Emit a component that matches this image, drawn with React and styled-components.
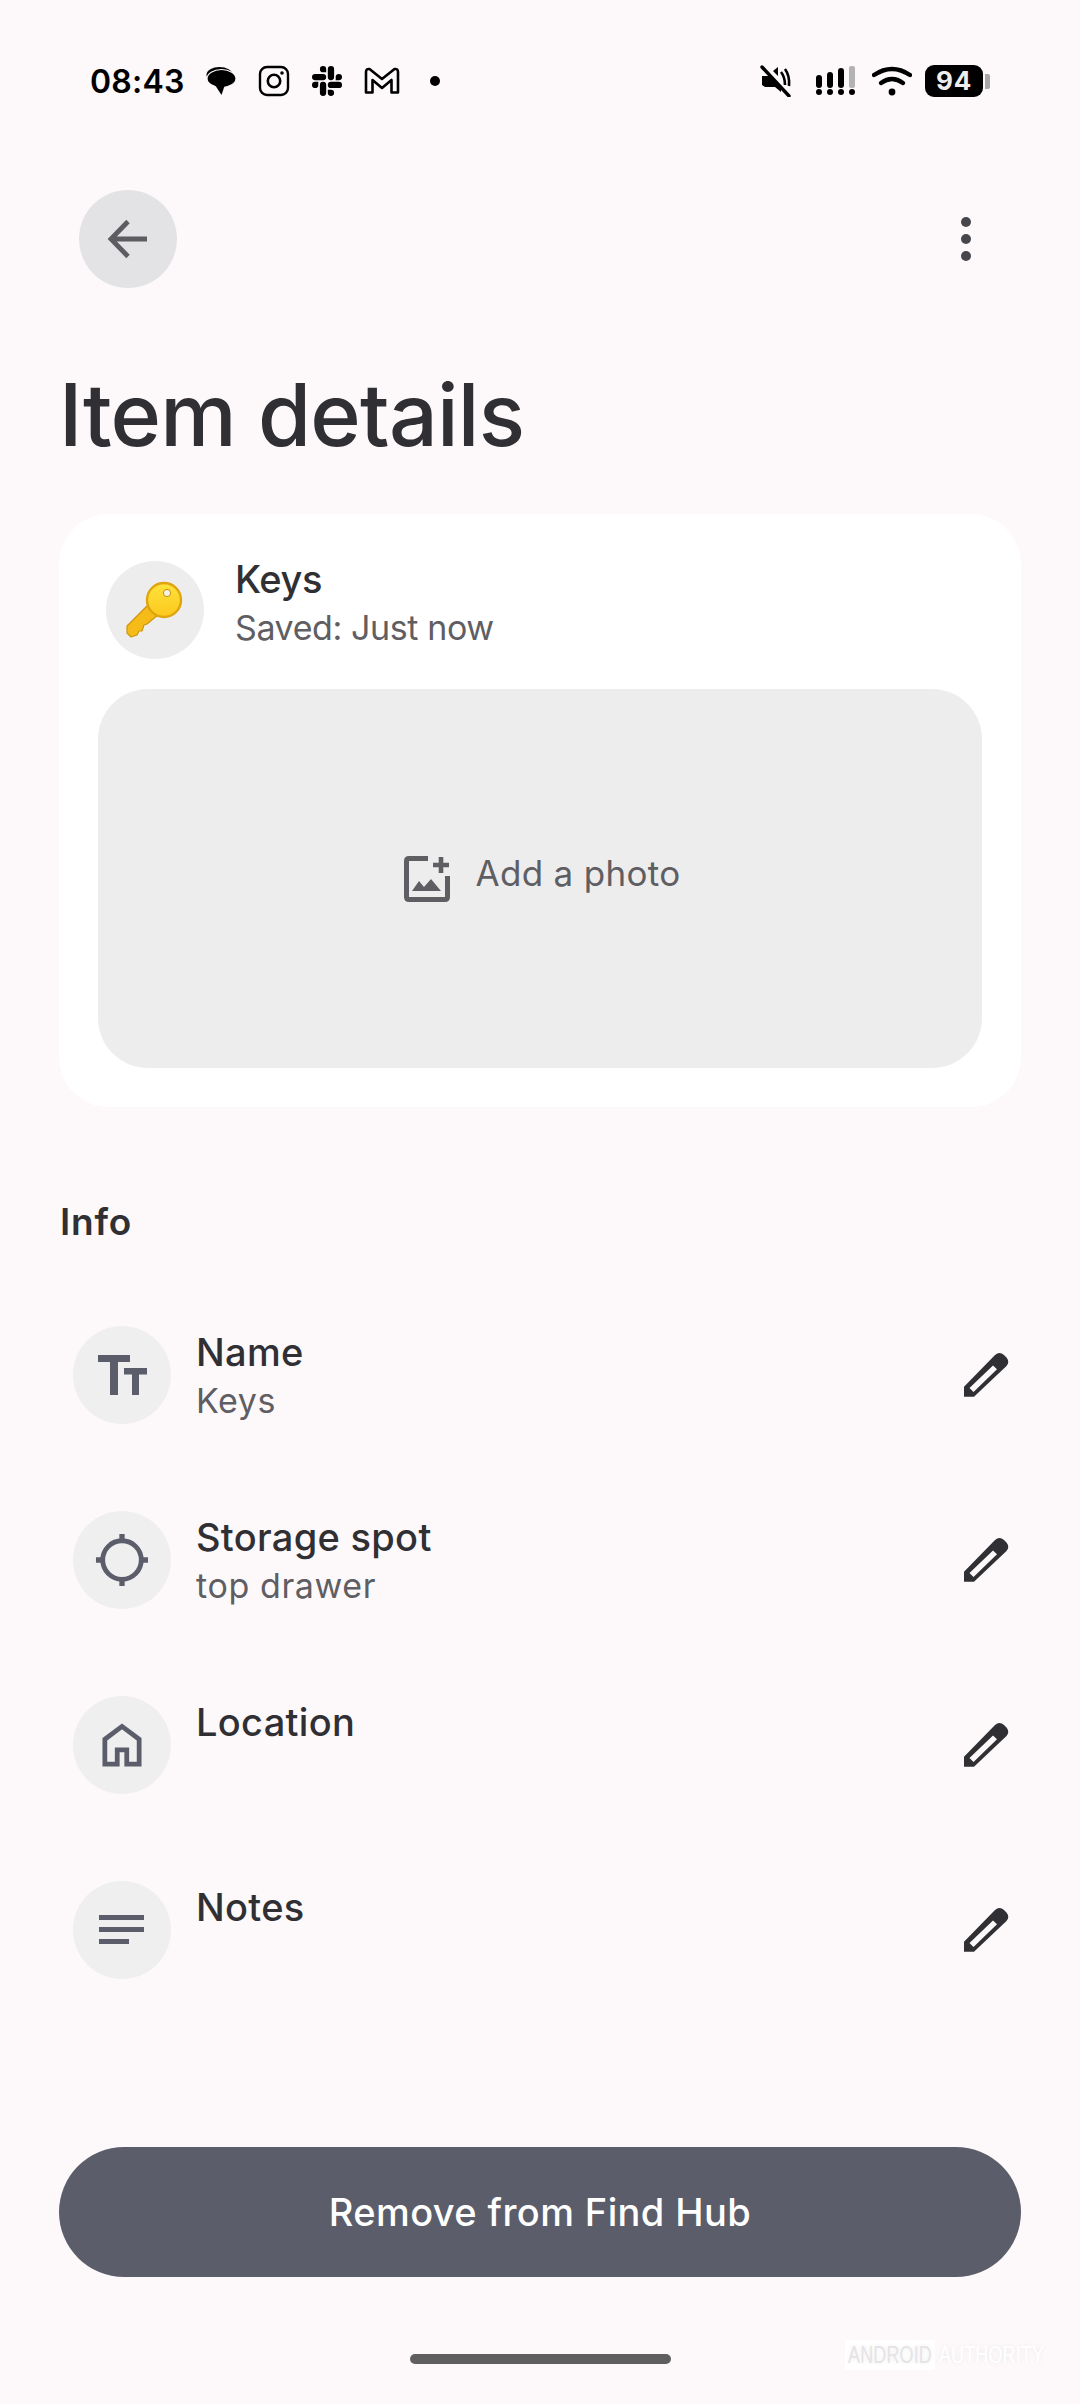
import React from 'react';
import styled, { createGlobalStyle } from 'styled-components';
import { SiSlack } from 'react-icons/si';

const pageBg = '#fdf9fa';
const Global = createGlobalStyle`
  html, body { margin: 0; padding: 0; background: ${pageBg}; }
  * { box-sizing: border-box; }
`;
const font = `Inter, "Noto Sans", sans-serif`;

const Page = styled.div`
  position: relative; width: 1080px; height: 2404px; background: ${pageBg};
  display: flex; flex-direction: column; font-family: ${font}; overflow: hidden;
`;
const StatusBar = styled.div`
  height: 34px; margin-top: 64px; padding: 0 90px 0 90px;
  display: flex; align-items: center; justify-content: space-between; color: #000;
`;
const StatusGroup = styled.div`display: flex; align-items: center; gap: ${p => p.$gap || 0}px;`;
const Time = styled.span`font-size: 32px; font-weight: 600; letter-spacing: 0.2px; width: 94px;`;
const TopBar = styled.div`
  margin-top: 92px; padding: 0 95px 0 79px; height: 98px;
  display: flex; align-items: center; justify-content: space-between;
`;
const BackButton = styled.div`
  width: 98px; height: 98px; border-radius: 50%; background: #e3e2e5;
  display: flex; align-items: center; justify-content: center;
`;
const MoreDots = styled.div`
  display: flex; flex-direction: column; gap: 7px; width: 36px; align-items: center; margin-right: 1px;
`;
const Dot = styled.span`width: 10px; height: 10px; border-radius: 50%; background: #47464b;`;
const Title = styled.h1`
  margin: 77px 0 0 59px; font-size: 86px; line-height: 100px; font-weight: 500;
  color: #303034; letter-spacing: -0.8px;
`;
const Card = styled.section`
  margin: 49px 59px 0; height: 593px; background: #fff; border-radius: 50px;
  padding: 47px 39px 39px;
`;
const CardHead = styled.div`display: flex; align-items: center; margin-left: 8px; height: 98px;`;
const IconCircle = styled.div`
  width: 98px; height: 98px; border-radius: 50%; flex: none;
  background: ${p => p.$light ? '#f0eff0' : '#eeeded'};
  display: flex; align-items: center; justify-content: center;
`;
const HeadText = styled.div`margin-left: 31px; display: flex; flex-direction: column; margin-top: -14px;`;
const HeadName = styled.div`font-size: 38px; line-height: 50px; font-weight: 450; color: #303034; letter-spacing: -0.4px;`;
const HeadSub = styled.div`font-size: 34px; line-height: 48px; color: #5f5e63; letter-spacing: -0.4px;`;
const PhotoBox = styled.div`
  margin-top: 30px; height: 379px; border-radius: 50px; background: #eeeded;
  display: flex; align-items: center; justify-content: center; gap: 26px; padding-left: 4px;
  color: #5f5e63; font-size: 35px; letter-spacing: 0.3px;
`;
const PhotoLabel = styled.span`margin-top: -12px;`;
const SectionTitle = styled.h2`
  margin: 92px 0 0 60px; font-size: 37px; line-height: 46px; font-weight: 600;
  color: #303034; letter-spacing: 0.8px;
`;
const List = styled.div`
  margin-top: 81px; padding: 0 67px 0 73px; display: flex; flex-direction: column; gap: 87px;
`;
const Row = styled.div`display: flex; align-items: flex-start; height: 98px;`;
const RowText = styled.div`flex: 1; margin-left: 25px; margin-top: 2px; display: flex; flex-direction: column;`;
const RowName = styled.div`font-size: 38px; line-height: 48px; font-weight: 450; color: #303034; letter-spacing: 0.3px;`;
const RowValue = styled.div`font-size: 34px; line-height: 50px; color: #5f5e63; letter-spacing: 0.6px;`;
const EditIcon = styled.svg`width: 54px; height: 54px; margin-top: 22px; flex: none;`;
const RemoveButton = styled.button`
  margin: 168px 59px 0; height: 130px; border: 0; border-radius: 65px; background: #5b5d6b;
  color: #fff; font-family: ${font}; font-size: 38px; font-weight: 500; letter-spacing: 0.4px;
`;
const HandleRow = styled.div`margin-top: 77px; display: flex; justify-content: center; padding-left: 1px;`;
const Handle = styled.div`width: 261px; height: 10px; border-radius: 5px; background: #5f5f60;`;
const Watermark = styled.div`
  position: absolute; left: 845px; top: 2340px; display: flex; gap: 5px;
  font-family: "Liberation Sans", sans-serif; font-size: 23px; line-height: 30px;
  transform-origin: left center; letter-spacing: 0.2px;
  transform: scaleX(0.78);
  color: #fff; text-shadow: 0 0 6px rgba(0,0,0,0.08);
  white-space: nowrap;
`;
const WatermarkBox = styled.span`background: #ffffff; color: #e6e3e5; padding: 0 4px;`;

const Pencil = () => (
  <EditIcon viewBox="30 18 54 54">
    <path fillRule="evenodd" fill="#303034" d="M35 66.7 L35 56.7 L66 25 Q70.5 21 75 25 L77.5 27.5 Q81 32 77.5 36 L45 66.7 Z M40.5 58 L44.5 62 L68 39.2 L64 35.6 Z" />
  </EditIcon>
);

const ChatIcon = () => (
  <svg width="30" height="30" viewBox="0 0 30 30">
    <ellipse cx="13.5" cy="9" rx="13" ry="8" fill="#000" />
    <ellipse cx="15.5" cy="12.5" rx="14.5" ry="9" fill="#000" stroke={pageBg} strokeWidth="1.2" />
    <path fill="#000" d="M9 19 L15.5 29 L18.5 20 Z" />
  </svg>
);
const InstaIcon = () => (
  <svg width="32" height="32" viewBox="0 0 32 32" fill="none" stroke="#000">
    <rect x="2" y="2" width="28" height="28" rx="7" strokeWidth="2.4" />
    <circle cx="16" cy="16" r="6.2" strokeWidth="2.6" />
    <circle cx="24" cy="8" r="1.8" fill="#000" stroke="none" />
  </svg>
);
const GmailIcon = () => (
  <svg width="36" height="28" viewBox="0 0 36 28" fill="none" stroke="#000" strokeWidth="2.6" strokeLinejoin="round">
    <path d="M2 25.5 H8.5 V13 L18 21 L27.5 13 V25.5 H34 V5 Q34 1.5 30.5 2 L18 12 L5.5 2 Q2 1.5 2 5 Z" />
  </svg>
);
const MuteIcon = () => (
  <svg width="42" height="32" viewBox="0 0 42 32">
    <path fill="#000" d="M2 11 H8 L10 10 L21 21 V27 L15 22 H5 L2 20 Z M13 6 L18 2 V11 Z" />
    <path d="M21 7 Q25 12 25 20 M25 4 Q30 11 29 21" fill="none" stroke="#000" strokeWidth="2.6" />
    <path d="M2 2 L29 31" stroke="#000" strokeWidth="3.4" strokeLinecap="round" />
  </svg>
);
const SignalIcon = () => (
  <svg width="44" height="30" viewBox="0 0 44 30">
    <rect x="1" y="9" width="6" height="13" rx="3" fill="#000" />
    <rect x="12" y="6" width="6" height="16" rx="3" fill="#000" />
    <rect x="23" y="2" width="6" height="20" rx="3" fill="#000" />
    <rect x="34" y="0" width="6" height="22" rx="2" fill="#b4b3b4" />
    {[4, 15, 26, 37].map(x => <circle key={x} cx={x} cy="26" r="3" fill="#000" />)}
  </svg>
);
const WifiIcon = () => (
  <svg width="40" height="30" viewBox="0 0 40 30" fill="none" stroke="#000" strokeWidth="4.4" strokeLinecap="round">
    <path d="M2 9 Q20 -3 38 9" />
    <path d="M9 17 Q20 9 31 17" />
    <circle cx="20" cy="26" r="3.4" fill="#000" stroke="none" />
  </svg>
);
const BatteryWrap = styled.div`display: flex; align-items: center; gap: 2px;`;
const BatteryBody = styled.div`
  width: 58px; height: 32px; border-radius: 9px; background: #000; color: #eee;
  font: 700 26px/32px ${font}; text-align: center; letter-spacing: 0.8px;
`;
const BatteryCap = styled.div`width: 5px; height: 15px; background: #a8a8a8; border-radius: 0 2px 2px 0;`;
const StatusDot = styled.span`width: 10px; height: 10px; border-radius: 50%; background: #000; margin-left: 8px;`;

const Key = () => (
  <svg width="58" height="58" viewBox="0 0 58 58">
    <defs>
      <linearGradient id="keyGold" x1="0.5" y1="0" x2="0.6" y2="1">
        <stop offset="0" stopColor="#ffe23c" />
        <stop offset="1" stopColor="#fbc81c" />
      </linearGradient>
    </defs>
    <path fill="#f5bb18" stroke="#cf950c" strokeWidth="1.2" strokeLinejoin="round" d="M21 25 L1 45 L1 52 L5 56 L11 54 L13 50 L16 50 L18 44 L21 43 L33 33 Z" />
    <circle cx="38" cy="19" r="17" fill="url(#keyGold)" stroke="#dfa40e" strokeWidth="2.4" />
    <circle cx="41" cy="12" r="3.6" fill="#f5f2ea" stroke="#c98f0a" strokeWidth="1" />
  </svg>
);
const BackArrow = () => (
  <svg width="42" height="42" viewBox="0 0 42 42" fill="none" stroke="#5d5c61" strokeWidth="4.8">
    <path d="M40 21 H4 M21 3.5 L4 21 L21 38.5" />
  </svg>
);
const PhotoIcon = () => (
  <svg width="46" height="46" viewBox="0 0 46 46" fill="none">
    <path d="M24 2.5 H5 Q2.5 2.5 2.5 5 V41 Q2.5 43.5 5 43.5 H41 Q43.5 43.5 43.5 41 V20" stroke="#5f5e63" strokeWidth="5" />
    <path d="M29 9 H45 M37 1 V17" stroke="#5f5e63" strokeWidth="4.6" />
    <path fill="#5f5e63" d="M8 35 L15 25 L20 31 L27 23 L37 35 Z" />
  </svg>
);
const TextSizeIcon = () => (
  <svg width="49" height="40" viewBox="0 0 49 40" fill="#5b5d6b">
    <path d="M0 0 H32 V7 H20 V40 H12 V7 H0 Z M26 13 H49 V19.5 H41 V40 H34 V19.5 H26 Z" />
  </svg>
);
const TargetIcon = () => (
  <svg width="54" height="54" viewBox="0 0 56 56" fill="none" stroke="#5b5d6b" strokeWidth="5">
    <circle cx="28" cy="28" r="20" />
    <path d="M28 1 V8 M28 48 V55 M1 28 H8 M48 28 H55" strokeWidth="5.5" />
  </svg>
);
const HomeIcon = () => (
  <svg width="40" height="44" viewBox="0 0 42 46" fill="none" stroke="#5b5d6b" strokeWidth="5">
    <path d="M3 43 V17 L21 3.5 L39 17 V43 H26 V28 H16 V43 Z" />
  </svg>
);
const NotesIcon = () => (
  <svg width="46" height="32" viewBox="0 0 46 32" fill="#5b5d6b">
    <rect x="0" y="1" width="45" height="5" />
    <rect x="0" y="13" width="45" height="5" />
    <rect x="0" y="25" width="30" height="5" />
  </svg>
);

const rows = [
  { name: 'Name', value: 'Keys', icon: <TextSizeIcon /> },
  { name: 'Storage spot', value: 'top drawer', icon: <TargetIcon /> },
  { name: 'Location', icon: <HomeIcon /> },
  { name: 'Notes', icon: <NotesIcon /> },
];

export default function App() {
  return (
    <Page>
      <Global />
      <StatusBar>
        <StatusGroup $gap={22}>
          <Time>08:43</Time>
          <ChatIcon />
          <InstaIcon />
          <SiSlack size={30} />
          <GmailIcon />
          <StatusDot />
        </StatusGroup>
        <StatusGroup $gap={13}>
          <MuteIcon />
          <SignalIcon />
          <WifiIcon />
          <BatteryWrap>
            <BatteryBody>94</BatteryBody>
            <BatteryCap />
          </BatteryWrap>
        </StatusGroup>
      </StatusBar>
      <TopBar>
        <BackButton><BackArrow /></BackButton>
        <MoreDots><Dot /><Dot /><Dot /></MoreDots>
      </TopBar>
      <Title>Item details</Title>
      <Card>
        <CardHead>
          <IconCircle><Key /></IconCircle>
          <HeadText>
            <HeadName>Keys</HeadName>
            <HeadSub>Saved: Just now</HeadSub>
          </HeadText>
        </CardHead>
        <PhotoBox>
          <PhotoIcon />
          <PhotoLabel>Add a photo</PhotoLabel>
        </PhotoBox>
      </Card>
      <SectionTitle>Info</SectionTitle>
      <List>
        {rows.map(r => (
          <Row key={r.name}>
            <IconCircle $light>{r.icon}</IconCircle>
            <RowText>
              <RowName>{r.name}</RowName>
              {r.value && <RowValue>{r.value}</RowValue>}
            </RowText>
            <Pencil />
          </Row>
        ))}
      </List>
      <RemoveButton>Remove from Find Hub</RemoveButton>
      <HandleRow><Handle /></HandleRow>
      <Watermark><WatermarkBox>ANDROID</WatermarkBox><span>AUTHORITY</span></Watermark>
    </Page>
  );
}
